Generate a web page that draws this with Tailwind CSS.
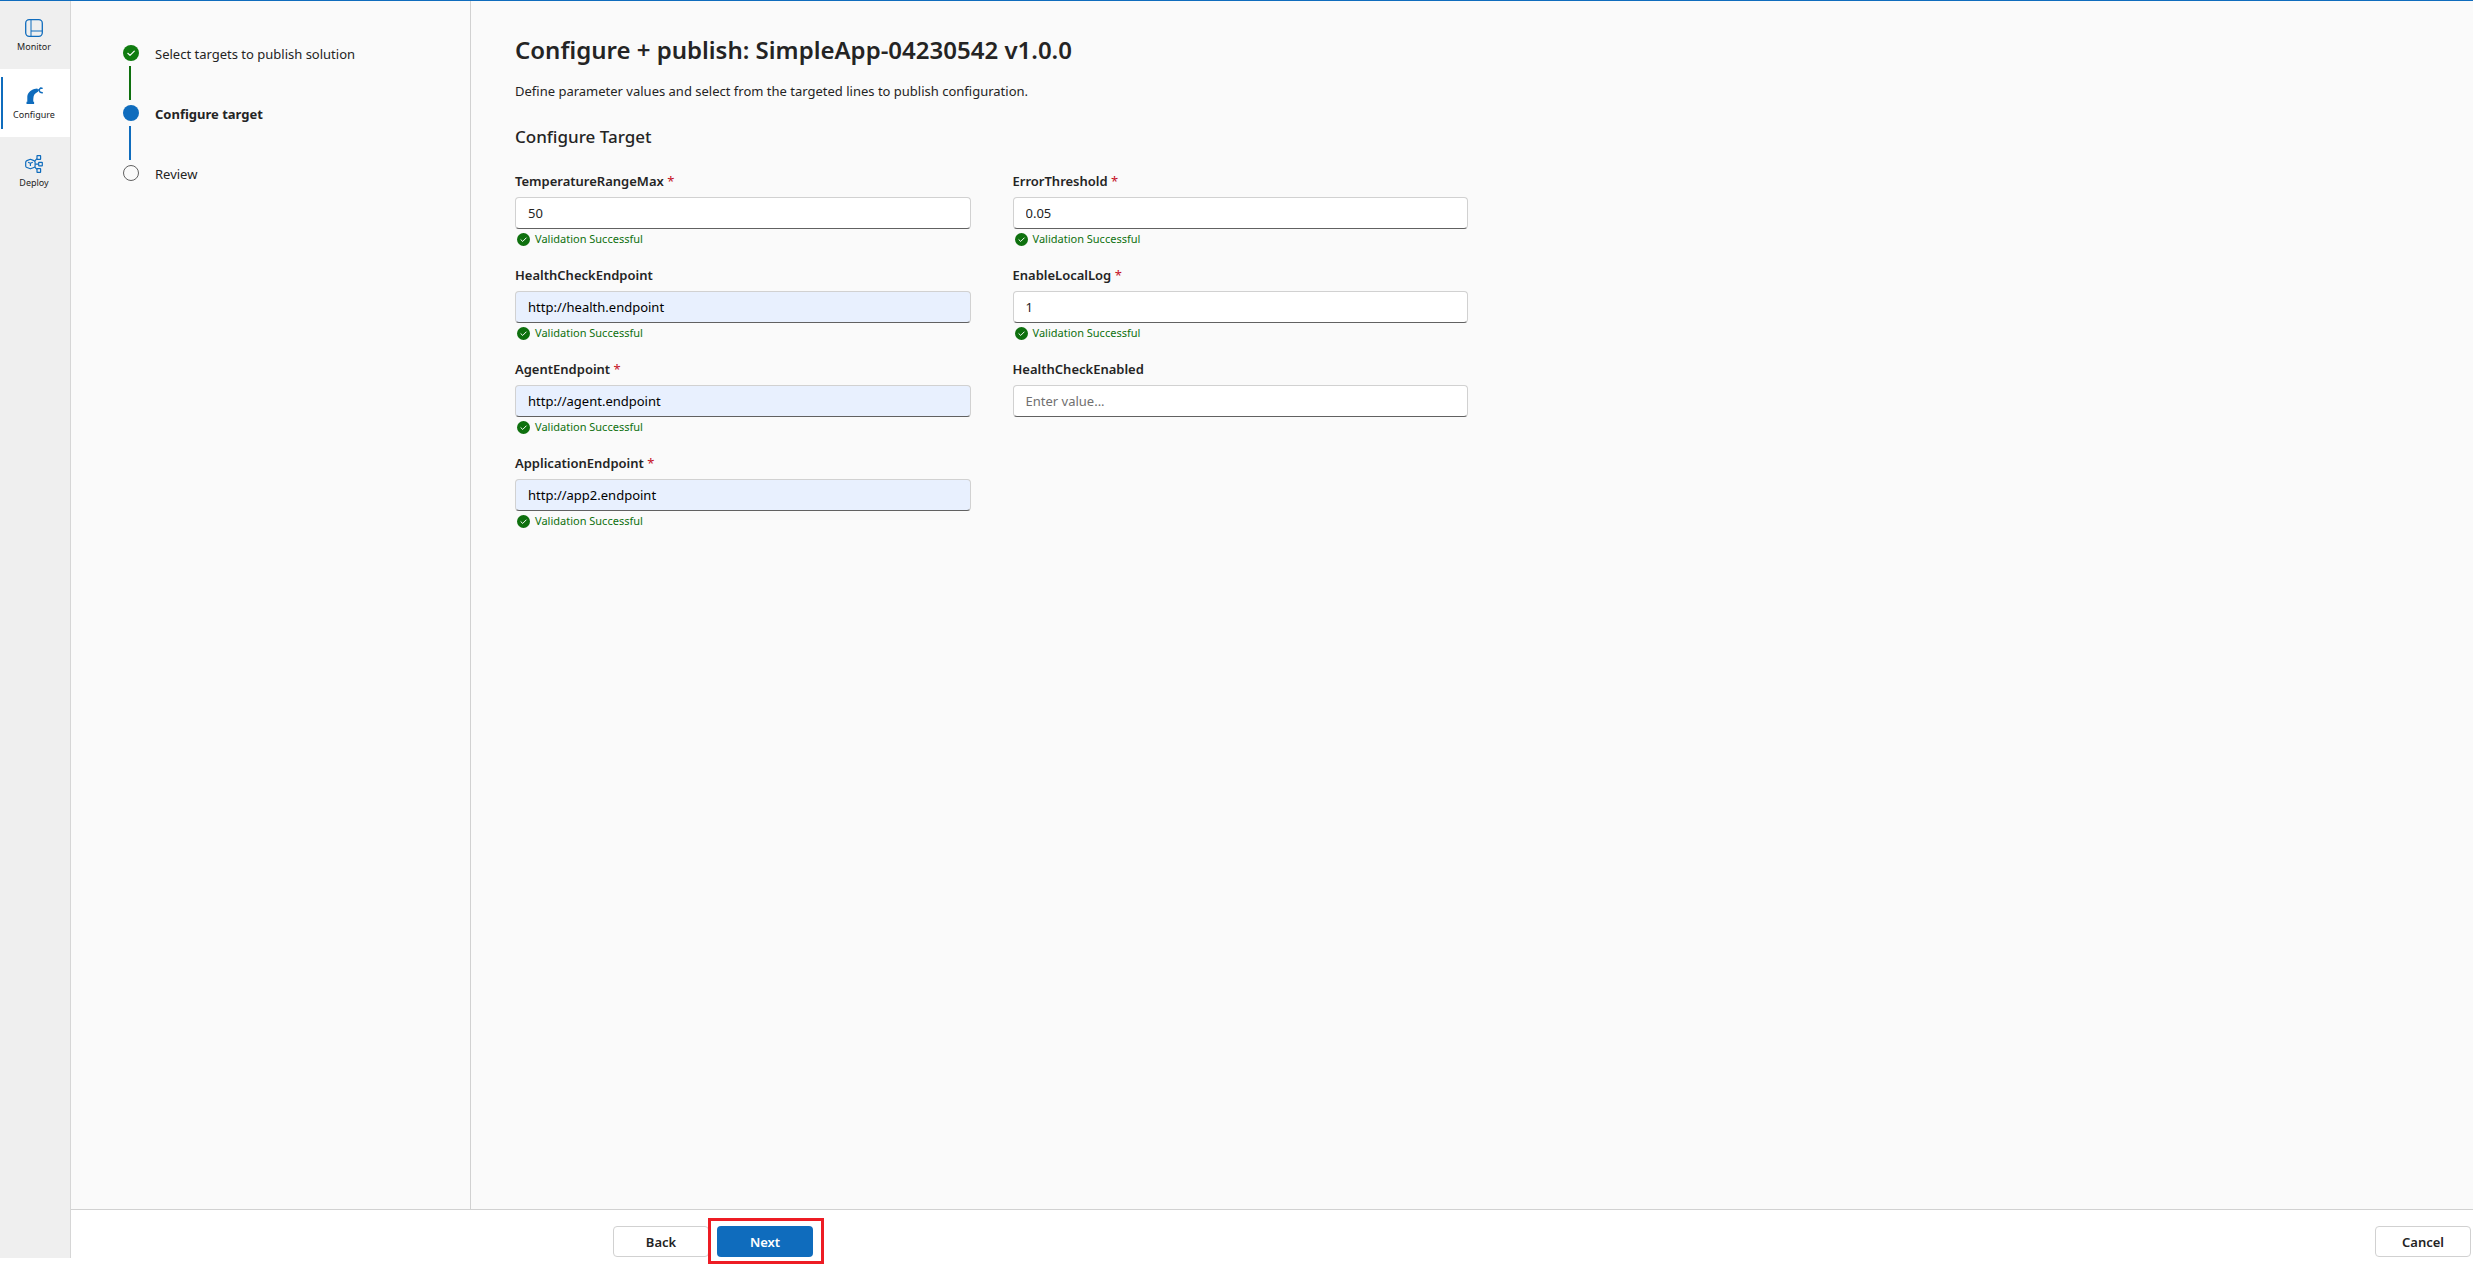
<!DOCTYPE html>
<html lang="en">
<head>
<meta charset="utf-8">
<meta name="viewport" content="width=device-width, initial-scale=1">
<title>Configure + publish</title>
<script src="https://cdn.jsdelivr.net/npm/@tailwindcss/browser@4"></script>
</head>
<body class="flex min-h-screen flex-col border-t border-[#0f6cbd] bg-white font-['Noto_Sans',sans-serif] text-[13px] leading-5 text-[#242424]">

<!-- Shared success badge -->
<svg class="hidden" aria-hidden="true">
  <symbol id="check" viewBox="0 0 16 16">
    <circle cx="8" cy="8" r="8" fill="currentColor"/>
    <path d="M4.8 8.3 7 10.4 11.3 6.1" fill="none" stroke="#fff" stroke-width="1.2" stroke-linecap="round" stroke-linejoin="round"/>
  </symbol>
</svg>

<div class="flex flex-1">
  <!-- Side rail -->
  <nav class="mb-[7px] w-[71px] shrink-0 border-r border-[#d6d6d6] bg-[#efefef] text-[9px] leading-3 text-[#242424]">
    <a href="#" class="flex h-[68px] flex-col items-center gap-1 pt-[18px] pr-0.5">
      <svg class="size-[18px]" viewBox="0 0 18 18" fill="none" stroke="#0f6cbd">
        <rect x=".7" y=".7" width="16.6" height="16.6" rx="3.5" stroke-width="1.3"/>
        <path d="M6 1v16M6 12h11"/>
      </svg>
      <span>Monitor</span>
    </a>
    <a href="#" aria-current="page" class="relative flex h-[68px] flex-col items-center gap-1 bg-white pt-[18px] pr-0.5">
      <span class="absolute left-px top-2 h-[52px] w-0.5 bg-[#0f6cbd]"></span>
      <svg class="size-[18px]" viewBox="0 0 18 18" fill="#0f6cbd">
        <path d="M1.5 14.7h7.6V17H1.5zM2.3 14.8V9.5C2.6 6 5.3 3.200 9.300 1.900l3-.4 1 3-2.600 1.800C9 7.400 8.300 9 8.300 14.800z"/>
        <path d="M12.300 3h1.800M17 1.300l-1.600-.2-1.500 2 1.400 2.200 1.900.5" fill="none" stroke="#0f6cbd" stroke-width="1.5" stroke-linejoin="round" stroke-linecap="round"/>
      </svg>
      <span>Configure</span>
    </a>
    <a href="#" class="flex h-[68px] flex-col items-center gap-1 pt-[18px] pr-0.5">
      <svg class="size-[18px]" viewBox="0 0 18 18" fill="none" stroke="#0f6cbd" stroke-width="1.2" stroke-linejoin="round">
        <path d="M5.400 4.300 1.900 5.600C1 6 .7 6.600.7 7.300v3.600c0 .8.4 1.300 1.200 1.600l3.500 1.300 3.500-1.300c.8-.3 1.200-.8 1.200-1.600V7.300c0-.7-.3-1.300-1.200-1.700zM3 7.200l2.400 1 2.400-1M5.400 8.200v2.800"/>
        <path d="M9.700 6.200 12 3.700M10.300 9.100h3.400M9.700 12l2.300 2.300"/>
        <rect x="12" y=".7" width="3.600" height="3.600" rx=".3"/>
        <rect x="13.700" y="7.300" width="3.600" height="3.600" rx=".3"/>
        <rect x="12" y="13.700" width="3.600" height="3.600" rx=".3"/>
      </svg>
      <span>Deploy</span>
    </a>
  </nav>

  <div class="flex min-w-0 flex-1 flex-col">
    <div class="flex flex-1 bg-[#fafafa]">
      <!-- Wizard steps -->
      <aside class="w-[400px] shrink-0 border-r border-[#d1d1d1] pl-[52px] pt-11 leading-[18px]">
        <ol>
          <li class="flex h-15 gap-4">
            <div class="flex w-4 flex-col items-center">
              <svg class="size-4 text-[#107c10]"><use href="#check"/></svg>
              <span class="mr-0.5 mt-[5px] h-[34px] w-0.5 bg-[#0e700e]"></span>
            </div>
            <span>Select targets to publish solution</span>
          </li>
          <li class="flex h-15 gap-4" aria-current="step">
            <div class="flex w-4 flex-col items-center">
              <span class="size-4 rounded-full bg-[#0f6cbd]"></span>
              <span class="mr-0.5 mt-[5px] h-[34px] w-0.5 bg-[#0f6cbd]"></span>
            </div>
            <span class="font-bold">Configure target</span>
          </li>
          <li class="flex gap-4">
            <span class="size-4 rounded-full border border-[#616161]"></span>
            <span>Review</span>
          </li>
        </ol>
      </aside>

      <!-- Parameter form -->
      <main class="min-w-0 flex-1 px-11 pt-[33px]">
        <h1 class="text-2xl leading-8 font-semibold">Configure + publish: SimpleApp-04230542 v1.0.0</h1>
        <p class="mt-[15px]">Define parameter values and select from the targeted lines to publish configuration.</p>
        <h2 class="mt-6 text-[17px] leading-6 font-medium">Configure Target</h2>

        <form id="params" class="mt-[22px] grid max-w-[953px] grid-cols-2 gap-x-[42px]">
          <div class="flex h-[94px] flex-col">
            <label for="temp" class="mb-[6px] font-semibold">TemperatureRangeMax <span class="font-normal text-[#c50f1f]">*</span></label>
            <input id="temp" type="text" value="50" class="h-8 rounded border border-[#d1d1d1] border-b-[#616161] bg-white px-3">
            <p class="flex items-center gap-[5px] pl-0.5 text-[11px] text-[#0e700e]"><svg class="size-[13px]"><use href="#check"/></svg>Validation Successful</p>
          </div>
          <div class="flex h-[94px] flex-col">
            <label for="error" class="mb-[6px] font-semibold">ErrorThreshold <span class="font-normal text-[#c50f1f]">*</span></label>
            <input id="error" type="text" value="0.05" class="h-8 rounded border border-[#d1d1d1] border-b-[#616161] bg-white px-3">
            <p class="flex items-center gap-[5px] pl-0.5 text-[11px] text-[#0e700e]"><svg class="size-[13px]"><use href="#check"/></svg>Validation Successful</p>
          </div>
          <div class="flex h-[94px] flex-col">
            <label for="health" class="mb-[6px] font-semibold">HealthCheckEndpoint</label>
            <input id="health" type="text" value="http://health.endpoint" class="h-8 rounded border border-[#d1d1d1] border-b-[#616161] bg-[#e8f0fe] px-3 text-black">
            <p class="flex items-center gap-[5px] pl-0.5 text-[11px] text-[#0e700e]"><svg class="size-[13px]"><use href="#check"/></svg>Validation Successful</p>
          </div>
          <div class="flex h-[94px] flex-col">
            <label for="log" class="mb-[6px] font-semibold">EnableLocalLog <span class="font-normal text-[#c50f1f]">*</span></label>
            <input id="log" type="text" value="1" class="h-8 rounded border border-[#d1d1d1] border-b-[#616161] bg-white px-3">
            <p class="flex items-center gap-[5px] pl-0.5 text-[11px] text-[#0e700e]"><svg class="size-[13px]"><use href="#check"/></svg>Validation Successful</p>
          </div>
          <div class="flex h-[94px] flex-col">
            <label for="agent" class="mb-[6px] font-semibold">AgentEndpoint <span class="font-normal text-[#c50f1f]">*</span></label>
            <input id="agent" type="text" value="http://agent.endpoint" class="h-8 rounded border border-[#d1d1d1] border-b-[#616161] bg-[#e8f0fe] px-3 text-black">
            <p class="flex items-center gap-[5px] pl-0.5 text-[11px] text-[#0e700e]"><svg class="size-[13px]"><use href="#check"/></svg>Validation Successful</p>
          </div>
          <div class="flex h-[94px] flex-col">
            <label for="enabled" class="mb-[6px] font-semibold">HealthCheckEnabled</label>
            <input id="enabled" type="text" placeholder="Enter value..." class="h-8 rounded border border-[#d1d1d1] border-b-[#616161] bg-white px-3 placeholder:text-[#707070]">
          </div>
          <div class="flex h-[94px] flex-col">
            <label for="app" class="mb-[6px] font-semibold">ApplicationEndpoint <span class="font-normal text-[#c50f1f]">*</span></label>
            <input id="app" type="text" value="http://app2.endpoint" class="h-8 rounded border border-[#d1d1d1] border-b-[#616161] bg-[#e8f0fe] px-3 text-black">
            <p class="flex items-center gap-[5px] pl-0.5 text-[11px] text-[#0e700e]"><svg class="size-[13px]"><use href="#check"/></svg>Validation Successful</p>
          </div>
        </form>
      </main>
    </div>

    <!-- Wizard actions -->
    <footer class="flex h-14 items-start justify-between border-t border-[#d1d1d1] bg-white pt-4 pr-0.5 pl-[542px] font-semibold">
      <div class="flex gap-2">
        <button type="button" class="h-[31px] w-24 rounded border border-[#d1d1d1] bg-white">Back</button>
        <div class="relative">
          <button type="submit" form="params" class="h-[31px] w-24 rounded bg-[#0f6cbd] text-white">Next</button>
          <span class="pointer-events-none absolute -top-2 -right-[11px] -bottom-[7px] -left-[9px] border-3 border-[#ed1c24]"></span>
        </div>
      </div>
      <button type="button" class="h-[31px] w-24 rounded border border-[#d1d1d1] bg-white">Cancel</button>
    </footer>
  </div>
</div>
</body>
</html>
